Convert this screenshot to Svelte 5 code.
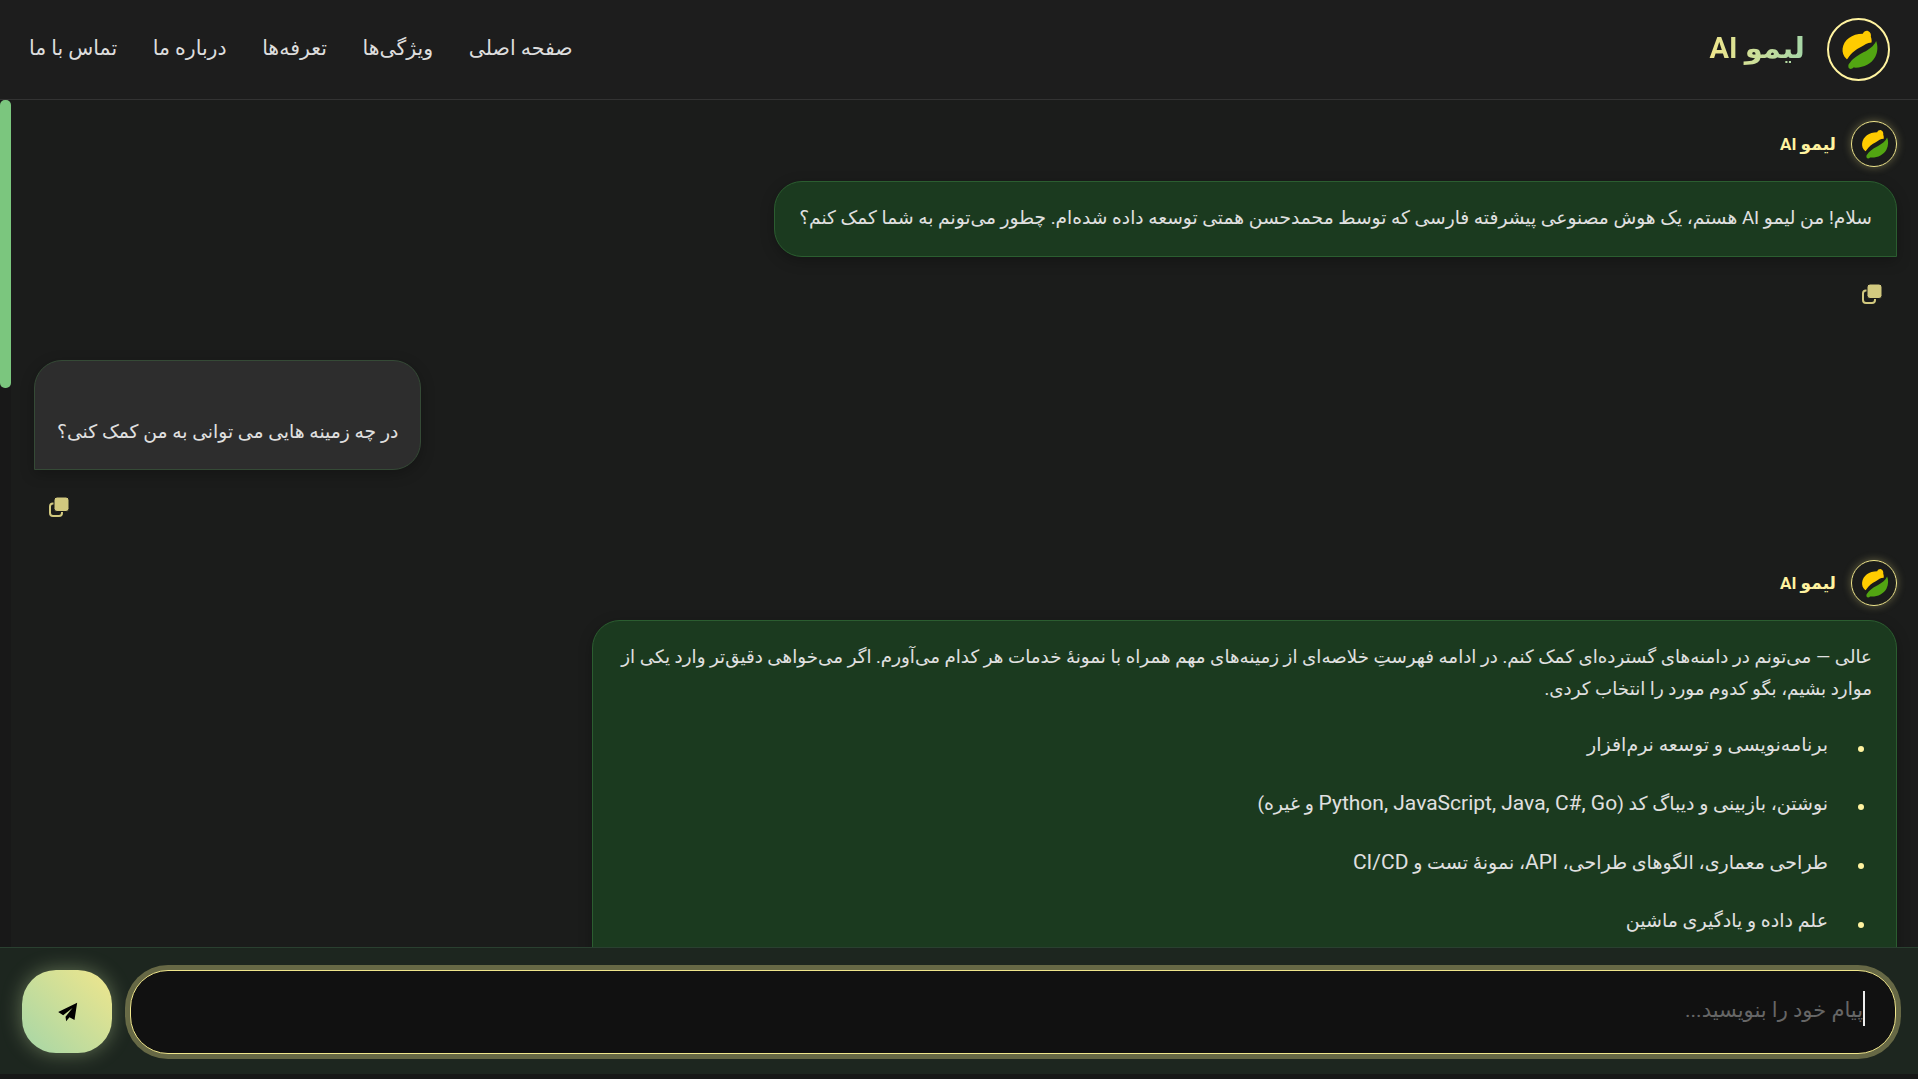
<script>
  const navLinks = ["صفحه اصلی", "ویژگی‌ها", "تعرفه‌ها", "درباره ما", "تماس با ما"];
</script>

{#snippet lemon()}
  <svg viewBox="0 0 62 62" aria-hidden="true">
    <path fill="#ffcc00" d="M18.500 41C15 38 13.800 34 14.300 30C15.500 21 24 14.500 35.500 14.500C36.500 12 39 10.800 41 11.500C43.500 12.500 44.500 15 44 17.500C44.800 19.500 45 21.500 44.700 23.700C40 24 37.500 26 33.500 28.500C28 31.500 24 34 20 40C19.500 41 19 41.500 18.500 41Z" />
    <path fill="#52a512" d="M49.500 22C51.500 27 51.500 33 48.500 39C44.500 46.500 35 51 25.500 50C24 52 21.500 52 20.500 50C20 48 20.500 46 22 45C24 42 26 40.500 28.500 38.700C32 36 34 35.500 36.700 33.700C42 31 47 27.500 49.500 22Z" />
  </svg>
{/snippet}

{#snippet copyIcon()}
  <svg class="copy" viewBox="0 0 20 20" aria-hidden="true">
    <rect x="1" y="6.500" width="12" height="12.500" rx="3" fill="none" stroke="#d2c97f" stroke-width="2" />
    <rect x="5" y="0" width="15" height="14.500" rx="3" fill="#d2c97f" stroke="#1a1a1a" stroke-width="1" />
  </svg>
{/snippet}

<div class="page" dir="rtl">
  <header>
    <a href="/" class="logo">
      <span class="logo-mark">{@render lemon()}</span>
      <span class="logo-text">لیمو AI</span>
    </a>
    <nav>
      {#each navLinks as link}
        <a href="/">{link}</a>
      {/each}
    </nav>
  </header>

  <main>
    <div class="scroll-track"><div class="scroll-thumb"></div></div>

    <section class="msg bot">
      <div class="who">
        <span class="avatar">{@render lemon()}</span>
        <span class="name">لیمو AI</span>
      </div>
      <div class="bubble green">
        <p>سلام! من لیمو AI هستم، یک هوش مصنوعی پیشرفته فارسی که توسط محمدحسن همتی توسعه داده شده‌ام. چطور می‌تونم به شما کمک کنم؟</p>
      </div>
      <div class="tools">{@render copyIcon()}</div>
    </section>

    <section class="msg user">
      <div class="bubble grey">
        <p>در چه زمینه هایی می توانی به من کمک کنی؟</p>
      </div>
      <div class="tools">{@render copyIcon()}</div>
    </section>

    <section class="msg bot">
      <div class="who">
        <span class="avatar">{@render lemon()}</span>
        <span class="name">لیمو AI</span>
      </div>
      <div class="bubble green long">
        <p>عالی — می‌تونم در دامنه‌های گسترده‌ای کمک کنم. در ادامه فهرستِ خلاصه‌ای از زمینه‌های مهم همراه با نمونهٔ خدمات هر کدام می‌آورم. اگر می‌خواهی دقیق‌تر وارد یکی از موارد بشیم، بگو کدوم مورد را انتخاب کردی.</p>
        <ul>
          <li>برنامه‌نویسی و توسعه نرم‌افزار</li>
          <li>نوشتن، بازبینی و دیباگ کد (<span class="lat">Python, JavaScript, Java, C#, Go</span> و غیره)</li>
          <li>طراحی معماری، الگوهای طراحی، <span class="lat">API</span>، نمونهٔ تست و <span class="lat">CI/CD</span></li>
          <li>علم داده و یادگیری ماشین</li>
        </ul>
      </div>
    </section>
  </main>

  <footer>
    <div class="field">
      <span class="caret"></span>
      <input type="text" placeholder="پیام خود را بنویسید..." />
    </div>
    <button class="send" aria-label="ارسال">
      <svg viewBox="0 0 62 60" aria-hidden="true">
        <path fill="#000" d="M60 2L3 30L18 40L46 18L25 44L27 58L37 46L52 54Z" />
      </svg>
    </button>
  </footer>
  <div class="strip"></div>
</div>

<style>
  :global(body) {
    background: #1a1a1a;
  }

  .page {
    display: flex;
    flex-direction: column;
    height: 1079px;
    overflow: hidden;
    font-family: Roboto, "DejaVu Sans", sans-serif;
    color: #e0e0e0;
  }

  header {
    display: flex;
    align-items: center;
    justify-content: space-between;
    flex-shrink: 0;
    height: 100px;
    box-sizing: border-box;
    padding: 0 28px 0 29px;
    background: #1d1d1d;
    border-bottom: 1px solid #333;
  }

  .logo {
    display: flex;
    align-items: center;
    gap: 22px;
    text-decoration: none;
  }

  .logo-mark {
    display: block;
    box-sizing: border-box;
    width: 63px;
    height: 63px;
    border: 2.500px solid #fff3a0;
    border-radius: 50%;
  }

  .logo-mark svg,
  .avatar svg {
    display: block;
    width: 100%;
    height: 100%;
  }

  .logo-text {
    padding-bottom: 4px;
    font-size: 29px;
    font-weight: 700;
    background: linear-gradient(270deg, #a5d6a7, #f0e68c);
    -webkit-background-clip: text;
    background-clip: text;
    color: transparent;
  }

  nav {
    display: flex;
    gap: 35.500px;
    padding-bottom: 4px;
  }

  nav a {
    color: #ddd;
    font-size: 20.500px;
    text-decoration: none;
  }

  main {
    position: relative;
    flex: 1;
    min-height: 0;
    overflow: hidden;
    box-sizing: border-box;
    padding: 21px 21px 0 34px;
    background: #1b1c1b;
  }

  .scroll-track {
    position: absolute;
    left: 0;
    top: 0;
    bottom: 0;
    width: 11px;
    background: #181818;
  }

  .scroll-thumb {
    height: 288px;
    border-radius: 5px;
    background: #7bc67e;
  }

  .msg {
    display: flex;
    flex-direction: column;
  }

  .msg.bot {
    align-items: flex-start;
  }

  .msg.user {
    align-items: flex-end;
    margin-top: 56px;
  }

  .msg.user + .msg.bot {
    margin-top: 43px;
  }

  .who {
    display: flex;
    align-items: center;
    gap: 15px;
    margin-bottom: 14px;
  }

  .avatar {
    display: block;
    box-sizing: border-box;
    width: 46px;
    height: 46px;
    border: 1.500px solid #f0e68c;
    border-radius: 50%;
    box-shadow: 0 0 8px rgba(240, 230, 140, 0.35);
  }

  .name {
    color: #fff3a0;
    font-size: 17px;
    font-weight: 700;
  }

  .bubble {
    box-sizing: border-box;
    font-size: 18.650px;
    line-height: 32px;
    box-shadow: 0 4px 14px rgba(0, 0, 0, 0.25);
  }

  .bubble p,
  .bubble ul {
    margin: 0;
  }

  .green {
    padding: 20px 24px 22px;
    background: #1b3a1f;
    border: 1px solid #2b5d30;
    border-radius: 28px 28px 0 28px;
  }

  .grey {
    padding: 55px 22px 21px;
    font-size: 18.800px;
    background: #2d2d2d;
    border: 1px solid #354a36;
    border-radius: 28px 28px 28px 0;
  }

  .long {
    width: 1305px;
    padding: 20px 24px 60px 20px;
  }

  .long p {
    font-size: 18.300px;
  }

  .long ul {
    margin-top: 14px;
    padding: 0 44px 0 0;
    list-style: none;
    font-size: 19px;
  }

  .long li {
    position: relative;
    padding: 10px 0 16px;
  }

  .long li::before {
    content: "";
    position: absolute;
    top: 27px;
    right: -36px;
    width: 6px;
    height: 6px;
    border-radius: 50%;
    background: #fff3a0;
  }

  .lat {
    font-size: 21px;
  }

  .tools {
    display: flex;
    padding: 27px 15px 0;
  }

  .copy {
    display: block;
    width: 20px;
    height: 20px;
  }

  footer {
    display: flex;
    align-items: center;
    gap: 18px;
    flex-shrink: 0;
    box-sizing: border-box;
    height: 127px;
    padding: 1px 22px 0;
    background: #1d261f;
    border-top: 1px solid #2a4030;
  }

  .field {
    position: relative;
    flex: 1;
    height: 84px;
  }

  .field input {
    display: block;
    box-sizing: border-box;
    width: 100%;
    height: 100%;
    padding: 0 32px 4px;
    background: #111;
    border: 1.500px solid #f0e68c;
    border-radius: 38px;
    box-shadow: 0 0 0 5px rgba(240, 230, 140, 0.35);
    outline: none;
    font: inherit;
    font-size: 21px;
    color: #e0e0e0;
  }

  .field input::placeholder {
    color: #666;
  }

  .caret {
    position: absolute;
    top: 21px;
    right: 31px;
    width: 2px;
    height: 35px;
    background: #eee;
  }

  .send {
    display: flex;
    align-items: center;
    justify-content: center;
    flex-shrink: 0;
    width: 90px;
    height: 83px;
    padding: 0;
    border: none;
    border-radius: 34px;
    background: linear-gradient(45deg, #a5d6a7, #f0e68c);
    box-shadow: 0 0 20px rgba(200, 225, 160, 0.4);
  }

  .send svg {
    width: 21px;
    height: 20px;
  }

  .strip {
    flex: none;
    height: 5px;
    background: #171817;
  }
</style>
